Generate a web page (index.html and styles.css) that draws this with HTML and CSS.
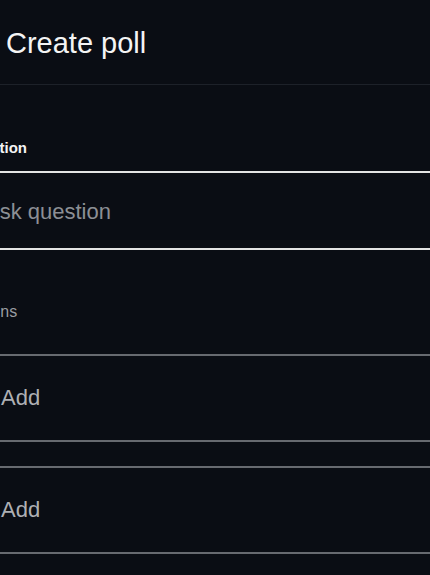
FILE: index.html
```html
<!DOCTYPE html>
<html lang="en">
<head>
<meta charset="utf-8">
<title>Create poll</title>
<link rel="stylesheet" href="styles.css">
</head>
<body>
<div class="page">
  <header class="header">
    <button class="back" aria-label="Back">
      <svg width="22" height="22" viewBox="0 0 24 24" fill="none" stroke="#f2f2f2" stroke-width="2" stroke-linecap="round" stroke-linejoin="round"><path d="M19 12H5M12 19l-7-7 7-7"/></svg>
    </button>
    <h1 class="title">Create poll</h1>
  </header>

  <section class="question">
    <div class="label">Question</div>
    <div class="input">Ask question</div>
  </section>

  <section class="options">
    <div class="options-label">Options</div>
    <div class="option">
      <svg class="plus" width="20" height="20" viewBox="0 0 20 20" fill="none" stroke="#b0b2b6" stroke-width="2" stroke-linecap="round"><path d="M10 3v14M3 10h14"/></svg>
      <span class="add">Add</span>
    </div>
    <div class="option">
      <svg class="plus" width="20" height="20" viewBox="0 0 20 20" fill="none" stroke="#b0b2b6" stroke-width="2" stroke-linecap="round"><path d="M10 3v14M3 10h14"/></svg>
      <span class="add">Add</span>
    </div>
    <div class="option">
      <svg class="plus" width="20" height="20" viewBox="0 0 20 20" fill="none" stroke="#b0b2b6" stroke-width="2" stroke-linecap="round"><path d="M10 3v14M3 10h14"/></svg>
      <span class="add">Add</span>
    </div>
  </section>
</div>
</body>
</html>
```
FILE: styles.css
```css
html, body {
  margin: 0;
  padding: 0;
  background: #0a0d14;
  overflow: hidden;
  height: 100%;
}

body {
  font-family: "Liberation Sans", Arial, sans-serif;
  color: #f2f2f2;
}

.page {
  margin-left: -54px;
  width: calc(100% + 54px);
}

.header {
  height: 84px;
  box-sizing: content-box;
  border-bottom: 1px solid #1d2129;
  display: flex;
  align-items: center;
  gap: 12px;
  padding: 0 16px;
}

.back {
  width: 32px;
  height: 32px;
  padding: 0;
  border: 0;
  background: none;
  display: flex;
  align-items: center;
  justify-content: center;
  flex: none;
}

.title {
  margin: 0;
  padding-top: 2px;
  font-size: 29px;
  font-weight: 400;
  line-height: 84px;
  color: #f4f4f4;
}

.question {
  padding-top: 53px;
}

.label {
  padding-left: 16px;
  font-size: 15px;
  font-weight: 700;
  line-height: 20px;
  color: #f4f4f4;
}

.input {
  margin-top: 13px;
  border-top: 2px solid #e4e4e4;
  border-bottom: 2px solid #e4e4e4;
  padding: 4px 0 1px 39px;
  font-size: 22px;
  line-height: 70px;
  color: #8c8f95;
}

.options {
  padding-top: 52px;
}

.options-label {
  padding-left: 16px;
  font-size: 16px;
  line-height: 20px;
  color: #9a9ca1;
}

.option {
  display: flex;
  align-items: center;
  gap: 19px;
  margin-top: 24px;
  padding-left: 16px;
  height: 84px;
  border-top: 2px solid #676a70;
  border-bottom: 2px solid #676a70;
}

.options-label + .option {
  margin-top: 32px;
}

.plus {
  flex: none;
}

.add {
  font-size: 22px;
  line-height: 84px;
  color: #aeb0b4;
}
```
